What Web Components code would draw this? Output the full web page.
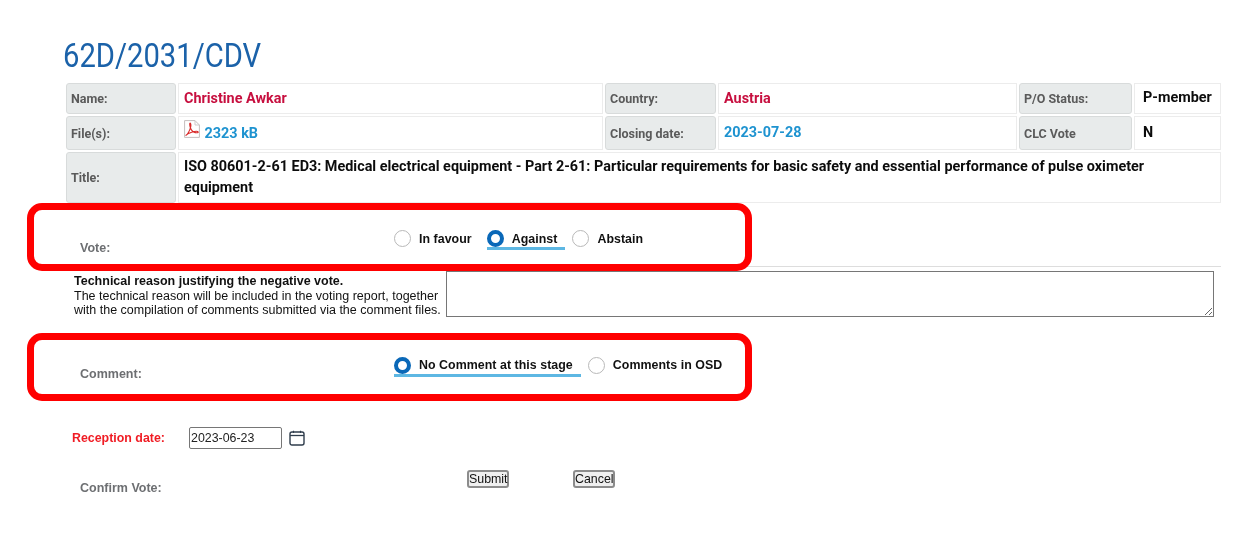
<!DOCTYPE html>
<html>
<head>
<meta charset="utf-8">
<title>Vote</title>
<style>
  html, body { margin: 0; background: #fff; overflow: hidden; }
  body { font-family: "Liberation Sans", Arial, sans-serif; }
</style>
</head>
<body>
<vote-page>
  <doc-title>62D/2031/CDV</doc-title>
  <info-table>
    <info-cell kind="label">Name:</info-cell>
    <info-cell tone="red" style="--pt:4px">Christine Awkar</info-cell>
    <info-cell kind="label">Country:</info-cell>
    <info-cell tone="red" style="--pt:4px">Austria</info-cell>
    <info-cell kind="label">P/O Status:</info-cell>
    <info-cell style="--pt:3px;--pl:8px">P-member</info-cell>

    <info-cell kind="label">File(s):</info-cell>
    <info-cell tone="blue" style="--pt:3px"><pdf-icon></pdf-icon> 2323 kB</info-cell>
    <info-cell kind="label">Closing date:</info-cell>
    <info-cell tone="blue">2023-07-28</info-cell>
    <info-cell kind="label">CLC Vote</info-cell>
    <info-cell style="--pl:8px">N</info-cell>

    <info-cell kind="label">Title:</info-cell>
    <info-cell wide style="--pt:3px">ISO 80601-2-61 ED3: Medical electrical equipment - Part 2-61: Particular requirements for basic safety and essential performance of pulse oximeter equipment</info-cell>
  </info-table>

  <choice-row label="Vote:" ruled style="--row-h:64px;--label-pb:11px;--radios-pb:16px;">
    <radio-option>In favour</radio-option>
    <radio-option checked>Against</radio-option>
    <radio-option>Abstain</radio-option>
  </choice-row>

  <reason-row>
    <b>Technical reason justifying the negative vote.</b><br>
    The technical reason will be included in the voting report, together<br>with the compilation of comments submitted via the comment files.
  </reason-row>

  <choice-row label="Comment:" style="--row-h:67px;--row-mt:15px;--label-pb:19px;--radios-pb:23px;">
    <radio-option checked>No Comment at this stage</radio-option>
    <radio-option>Comments in OSD</radio-option>
  </choice-row>

  <date-row label="Reception date:" value="2023-06-23"></date-row>
  <confirm-row label="Confirm Vote:"></confirm-row>
</vote-page>

<script>
// small helper so every element gets an open shadow root with its own styles
class BaseEl extends HTMLElement {
  render(html) {
    this.attachShadow({ mode: 'open' }).innerHTML = html;
  }
}

class VotePage extends BaseEl {
  constructor() {
    super();
    this.render(`<style>
      :host { display: block; width: 1260px; height: 543px; box-sizing: border-box; padding-top: 37px; filter: blur(.35px); }
    </style><slot></slot>`);
  }
}

class DocTitle extends BaseEl {
  constructor() {
    super();
    this.render(`<style>
      :host { display: block; height: 46px; padding-left: 63px; }
      h1 { display: inline-block; margin: 0; font: 400 33px/38px Roboto, sans-serif; color: #1b62a9; transform: scaleX(.885); transform-origin: 0 0; white-space: nowrap; }
    </style><h1><slot></slot></h1>`);
  }
}

class InfoTable extends BaseEl {
  constructor() {
    super();
    this.render(`<style>
      :host { display: grid; margin-left: 66px; width: 1155px;
        grid-template-columns: 110px 425px 111px 299px 113px 87px;
        grid-template-rows: 31px 34px 51px; gap: 2px; }
    </style><slot></slot>`);
  }
}

class InfoCell extends BaseEl {
  constructor() {
    super();
    const colors = { red: '#c70f3f', blue: '#1e93d0' };
    const color = colors[this.getAttribute('tone')] || '#0c0c0c';
    this.render(`<style>
      :host { display: block; box-sizing: border-box; font-family: Roboto, sans-serif; font-weight: 700; }
      :host([wide]) { grid-column: 2 / 7; }
      :host([kind="label"]) { display: flex; align-items: center; padding: 0 0 0 4px; font-size: 12.5px; color: #5a5a5a;
        background: #e8ebeb; border: 1px solid #d8dbdb; border-radius: 3px; }
      :host(:not([kind="label"])) { padding: var(--pt, 5px) 6px 0 var(--pl, 5px); border: 1px solid #ececec; font-size: 14.4px; line-height: 21px; color: ${color}; }
    </style><slot></slot>`);
  }
}

class PdfIcon extends BaseEl {
  constructor() {
    super();
    this.render(`<style>
      :host { display: inline-block; width: 16px; height: 18px; margin-right: 1px; vertical-align: 0; }
      svg { display: block; }
    </style><svg width="16" height="18" viewBox="0 0 16 18" fill="none">
      <path d="M.6.6H11L15.4 5V17.4H.6Z" stroke="#c4bdbd" fill="#fff"/>
      <path d="M11 .6V5H15.4" stroke="#cfc9c9"/>
      <path d="M1.6 15.6C3.4 14.4 5.6 10.8 6.6 7.4 7.1 5.4 6.9 3 6.2 3 5.4 3 5.7 5.8 6.4 7.7 7.2 10 9.4 12.2 11.2 12.6 13 13 14.6 12.8 14.2 12 13.8 11.2 10.6 11.4 7.6 12.3 5 13.1 2.6 14.4 1.6 15.6Z" stroke="#d92b2b" stroke-width="1.1"/>
    </svg>`);
  }
}

class ChoiceRow extends BaseEl {
  constructor() {
    super();
    const ruled = this.hasAttribute('ruled');
    this.render(`<style>
      :host { display: block; position: relative; height: var(--row-h); margin-top: var(--row-mt, 0); }
      .row { display: flex; box-sizing: border-box; height: 100%; width: 1155px; margin-left: 66px; align-items: flex-end;
        border-bottom: ${ruled ? '1px solid #ddd' : '0'}; }
      .label { width: 328px; padding: 0 0 var(--label-pb) 14px; box-sizing: border-box; font-size: 12.5px; font-weight: 700; color: #6d6f72; }
      .radios { display: flex; gap: 7px; padding-bottom: var(--radios-pb); }
      /* the red annotation drawn on top of the screenshot */
      .mark { position: absolute; left: 27px; top: 0; width: 725px; height: 68px; box-sizing: border-box;
        border: 7px solid #f00; border-radius: 15px; pointer-events: none; }
    </style>
    <div class="row"><span class="label">${this.getAttribute('label')}</span><div class="radios"><slot></slot></div></div>
    <div class="mark"></div>`);
  }
}

class RadioOption extends BaseEl {
  constructor() {
    super();
    this.render(`<style>
      :host { display: inline-flex; align-items: center; gap: 8px; height: 20px; padding-right: 8px; box-sizing: border-box;
        font-size: 12.4px; font-weight: 700; letter-spacing: .04px; color: #111; border-bottom: 3px solid transparent; white-space: nowrap; }
      :host([checked]) { border-bottom-color: #5db7e3; }
      .dot { width: 17px; height: 17px; box-sizing: border-box; border-radius: 50%; border: 1px solid #b8b8b8; background: #fff; }
      :host([checked]) .dot { border: 4.5px solid #0a68b8; }
    </style><span class="dot"></span><slot></slot>`);
  }
}

class ReasonRow extends BaseEl {
  constructor() {
    super();
    this.render(`<style>
      :host { display: flex; margin-left: 74px; width: 1140px; padding-top: 4px; }
      .text { width: 372px; flex: none; padding-top: 3px; font-size: 12.5px; line-height: 14.5px; color: #111; white-space: nowrap; }
      textarea { flex: 1; height: 46px; margin: 0; box-sizing: border-box; border: 1px solid #767676; border-radius: 0; padding: 2px; background: #fff; }
    </style><div class="text"><slot></slot></div><textarea></textarea>`);
  }
}

class DateRow extends BaseEl {
  constructor() {
    super();
    this.render(`<style>
      :host { display: flex; align-items: center; height: 22px; margin-top: 27px; padding-left: 72px; font-size: 12.4px; }
      label { width: 117px; font-weight: 700; color: #f01c24; }
      input { width: 93px; height: 22px; box-sizing: border-box; margin: 0; padding: 0 1px; border: 1px solid #767676; border-radius: 2px;
        font: 12.4px "Liberation Sans", Arial, sans-serif; color: #222; background: #fff; }
      svg { margin-left: 7px; display: block; }
    </style><label>${this.getAttribute('label')}</label><input type="text" value="${this.getAttribute('value')}">
    <svg width="16" height="16" viewBox="0 0 16 16" fill="none">
      <rect x="1" y="2" width="14" height="13" rx="2" stroke="#2f3d4c" stroke-width="1.4"/>
      <path d="M1 5.5H15" stroke="#2f3d4c" stroke-width="1.3"/>
      <path d="M4.5.8V3M11.5.8V3" stroke="#2f3d4c" stroke-width="1.1"/>
    </svg>`);
  }
}

class ConfirmRow extends BaseEl {
  constructor() {
    super();
    this.render(`<style>
      :host { display: flex; align-items: flex-start; margin-top: 21px; padding-left: 80px; font-size: 12.5px; }
      label { width: 387px; padding-top: 11px; font-weight: 700; color: #6d6f72; }
      button { width: 42px; height: 18px; box-sizing: border-box; margin: 0 64px 0 0; padding: 0; border: 2px solid #8c8c8c; border-radius: 3px;
        background: #efefef; font: 12.4px "Liberation Sans", Arial, sans-serif; color: #111; }
    </style><label>${this.getAttribute('label')}</label><button>Submit</button><button>Cancel</button>`);
  }
}

customElements.define('vote-page', VotePage);
customElements.define('doc-title', DocTitle);
customElements.define('info-table', InfoTable);
customElements.define('info-cell', InfoCell);
customElements.define('pdf-icon', PdfIcon);
customElements.define('choice-row', ChoiceRow);
customElements.define('radio-option', RadioOption);
customElements.define('reason-row', ReasonRow);
customElements.define('date-row', DateRow);
customElements.define('confirm-row', ConfirmRow);
</script>
</body>
</html>
